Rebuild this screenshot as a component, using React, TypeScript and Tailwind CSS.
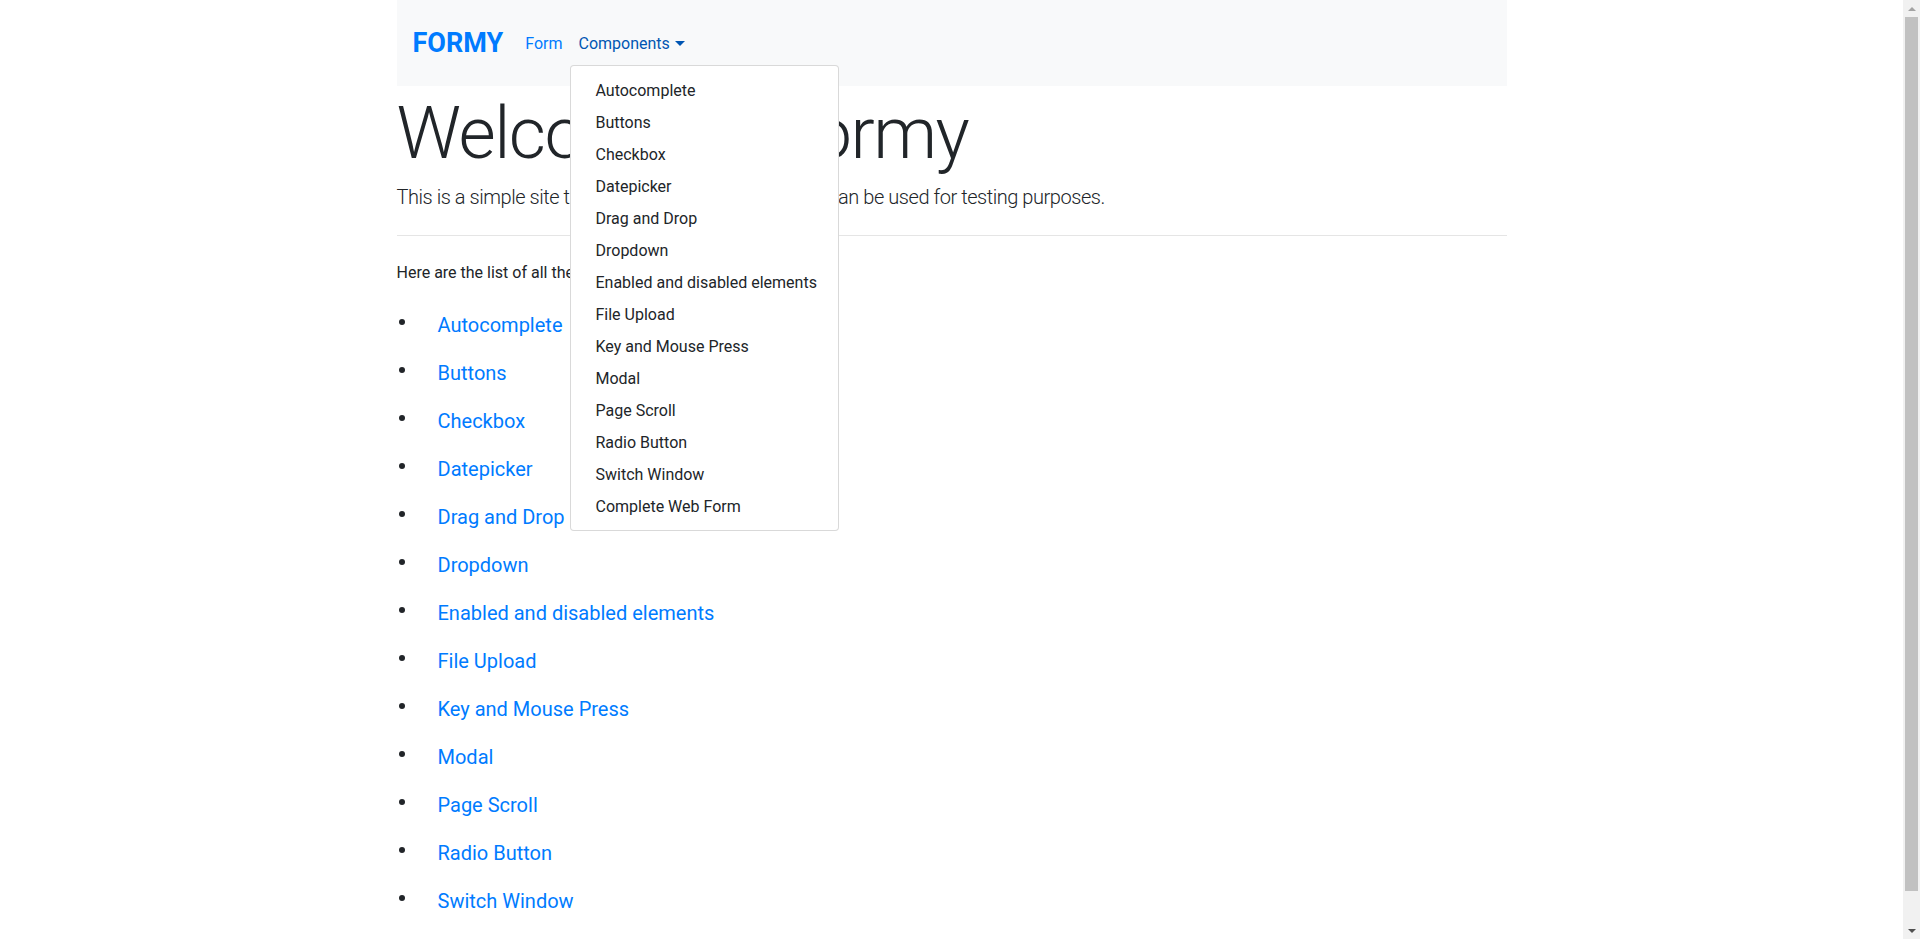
// Formy landing page with the Components dropdown open
const COMPONENTS: string[] = [
  "Autocomplete",
  "Buttons",
  "Checkbox",
  "Datepicker",
  "Drag and Drop",
  "Dropdown",
  "Enabled and disabled elements",
  "File Upload",
  "Key and Mouse Press",
  "Modal",
  "Page Scroll",
  "Radio Button",
  "Switch Window",
  "Complete Web Form",
];

function Navbar() {
  return (
    <nav className="flex h-[86px] items-center bg-[#f8f9fa] px-4">
      {/* Brand */}
      <a href="#" className="mr-[14px] text-[27px] font-bold leading-none text-[#007bff]">
        FORMY
      </a>
      {/* Links */}
      <ul className="flex">
        <li>
          <a href="#" className="block px-2 pb-[7px] pt-[9px] leading-6 text-[#007bff]">
            Form
          </a>
        </li>
        <li className="relative">
          <a href="#" className="flex items-center px-2 pb-[7px] pt-[9px] leading-6 text-[#0056b3]">
            Components
            <svg width="10" height="5" viewBox="0 0 10 5" className="ml-[5px] -translate-y-[1px]">
              <path d="M0 0h10L5 5z" fill="#0056b3" />
            </svg>
          </a>
          {/* Open dropdown menu */}
          <div className="absolute left-0 top-full z-10 mt-[2px] w-[269px] rounded border border-black/15 bg-white py-2">
            {COMPONENTS.map((name) => (
              <a
                key={name}
                href="#"
                className="block whitespace-nowrap px-6 pb-[3px] pt-[5px] leading-6 text-[#212529]"
              >
                {name}
              </a>
            ))}
          </div>
        </li>
      </ul>
    </nav>
  );
}

// Classic browser scrollbar on the right edge
function Scrollbar() {
  return (
    <div className="flex w-[17px] shrink-0 flex-col bg-[#f1f1f1]">
      <div className="flex h-[17px] items-center justify-center">
        <svg width="8" height="4" viewBox="0 0 8 4">
          <path d="M0 4L4 0l4 4z" fill="#a3a3a3" />
        </svg>
      </div>
      <div className="flex-1 px-[2px]">
        <div className="h-[874px] bg-[#c1c1c1]" />
      </div>
      <div className="flex h-[17px] items-center justify-center">
        <svg width="8" height="4" viewBox="0 0 8 4">
          <path d="M0 0h8L4 4z" fill="#505050" />
        </svg>
      </div>
    </div>
  );
}

export default function App() {
  return (
    <div className="flex h-screen overflow-hidden bg-white font-['Roboto','Liberation_Sans',sans-serif] text-base text-[#212529]">
      <div className="min-w-0 flex-1">
        <div className="mx-auto w-[1140px] px-[15px]">
          <Navbar />
          {/* Intro */}
          <h1 className="mb-[5px] mt-[5px] text-[72px] font-light leading-[86px] tracking-[-1.5px]">
            Welcome to Formy
          </h1>
          <p className="text-[20px] font-light leading-[30px] tracking-[-0.45px]">
            This is a simple site that has form components that can be used for testing purposes.
          </p>
          <hr className="mb-6 mt-[23px] border-t border-black/10" />
          <p className="mb-[15px] pt-[1px] leading-6">
            Here are the list of all the components available on this site:
          </p>
          {/* Component links */}
          <ul>
            {COMPONENTS.map((name) => (
              <li key={name} className="flex h-[48px] items-start">
                <span className="ml-[2px] mt-[19px] h-[6px] w-[6px] shrink-0 rounded-full bg-[#212529]" />
                <a href="#" className="ml-[33px] pt-[10px] text-[20px] leading-[30px] text-[#007bff]">
                  {name}
                </a>
              </li>
            ))}
          </ul>
        </div>
      </div>
      <Scrollbar />
    </div>
  );
}
